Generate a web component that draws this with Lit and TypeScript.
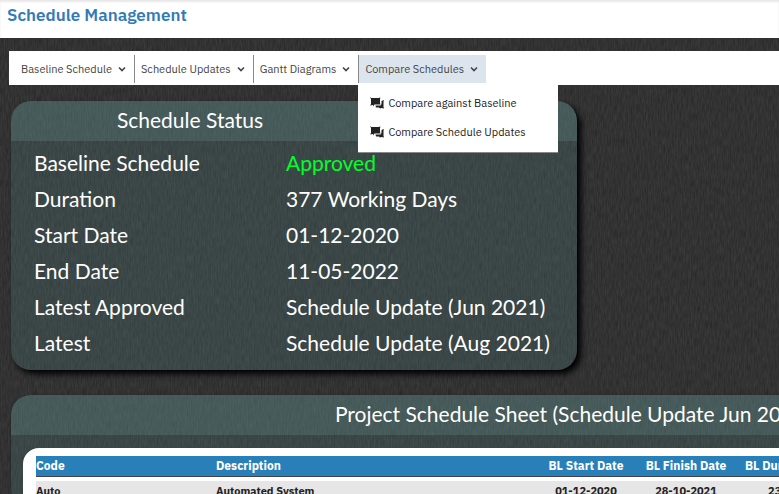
import { LitElement, html, css } from "lit";
import { customElement, state } from "lit/decorators.js";

interface Menu { label: string; }

const chevron = html`<svg class="chevron" viewBox="0 0 8 8" aria-hidden="true">
  <path d="M1 2.5 4 5.5 7 2.5" fill="none" stroke="currentColor" stroke-width="1.6"/></svg>`;

const compareIcon = html`<svg class="compare" viewBox="0 0 14 12" aria-hidden="true">
  <path fill="currentColor" d="M0 0 1.5 1H8.5L10.5 0.5 10 2V6L10.5 7.5H4.5L3 9.5V8L0 8.5 1 7V2Z"/>
  <path fill="currentColor" d="M11.5 4 14 3 13.5 4.5V10L14 11.5 11.5 11 10 11.5 9 10.5H6L5.5 8.5H10.5L11.5 7Z"/></svg>`;

@customElement("app-root")
export class AppRoot extends LitElement {
  @state() private open = 3;

  private menus: Menu[] = [
    { label: "Baseline Schedule" },
    { label: "Schedule Updates" },
    { label: "Gantt Diagrams" },
    { label: "Compare Schedules" },
  ];

  private status = [
    ["Baseline Schedule", "Approved"],
    ["Duration", "377 Working Days"],
    ["Start Date", "01-12-2020"],
    ["End Date", "11-05-2022"],
    ["Latest Approved", "Schedule Update (Jun 2021)"],
    ["Latest", "Schedule Update (Aug 2021)"],
  ];

  static styles = css`
    :host {
      display: flex;
      flex-direction: column;
      height: 100vh;
      overflow: hidden;
      background: #333;
      font-family: "IBM Plex Sans", Roboto, sans-serif;
    }
    * { box-sizing: border-box; }
    .top {
      height: 38px;
      flex: none;
      padding: 5px 7px;
      background: #fff;
      box-shadow: inset 0 2px 2px #e8e8e8;
    }
    .top h1 {
      margin: 0;
      font: 600 17px/20px "IBM Plex Sans", "Open Sans", sans-serif;
      color: #337ab7;
    }
    .page {
      position: relative;
      flex: 1;
      min-height: 0;
      overflow: hidden;
      padding: 13px 0 0 9px;
    }
    .texture {
      position: absolute;
      inset: 0;
      width: 100%;
      height: 100%;
    }
    .bar {
      position: relative;
      z-index: 2;
      display: flex;
      height: 34px;
      padding: 4px 0 0 6px;
      background: #fff;
    }
    .item { position: relative; height: 28px; }
    .item + .item { border-left: 1px solid #888; }
    .item button {
      display: flex;
      align-items: center;
      gap: 6px;
      height: 28px;
      padding: 0 8px 0 6px;
      border: 0;
      background: transparent;
      font: 11px/16px "IBM Plex Sans", Roboto, sans-serif;
      color: #444;
      white-space: nowrap;
    }
    .item.active button { background: #dce4ee; }
    .chevron { width: 8px; height: 8px; flex: none; }
    .drop {
      position: absolute;
      top: 28px;
      left: -1px;
      width: 200px;
      margin: 0;
      padding: 5px 0 6px;
      list-style: none;
      background: #fff;
      border-bottom: 1px solid #888;
    }
    .drop a {
      display: flex;
      align-items: center;
      gap: 4px;
      height: 29px;
      padding: 0 12px;
      font-size: 11px;
      line-height: 16px;
      color: #222;
      text-decoration: none;
      white-space: nowrap;
    }
    .compare { width: 14px; height: 12px; flex: none; }
    .panel {
      position: relative;
      margin-left: 2px;
      border-radius: 20px;
      background: rgba(95, 155, 155, 0.2);
      box-shadow: 4px 4px 6px #000;
      color: #fff;
      font: 21px/36px "Century Gothic", Lato, sans-serif;
    }
    .panel h2 {
      height: 40px;
      margin: 0;
      border-radius: 20px 20px 0 0;
      background: rgba(110, 155, 150, 0.24);
      font: inherit;
      line-height: 38px;
      text-align: center;
    }
    .status { width: 566px; margin-top: 16px; padding-bottom: 9px; }
    .status h2 { padding-right: 208px; }
    .status dl {
      display: grid;
      grid-template-columns: 252px 1fr;
      margin: 0;
      padding: 4px 0 0 23px;
    }
    .status dt, .status dd { margin: 0; height: 36px; white-space: nowrap; }
    .approved { color: #00ff2a; }
    .sheet { width: 1124px; margin-top: 25px; }
    .box {
      margin: 13px 12px 0;
      padding: 8px 13px;
      border-radius: 16px 16px 0 0;
      background: #fff;
    }
    table {
      width: 100%;
      table-layout: fixed;
      border-collapse: collapse;
      font: bold 11px/20px "IBM Plex Sans", "Open Sans", sans-serif;
      color: #222;
    }
    th { height: 20px; padding: 0; background: #2980b9; color: #fff; font-size: 12px; border-bottom: 1px solid #444; }
    td { height: 20px; padding: 0; background: #e6e6e6; text-align: center; }
    .gap td { height: 4px; background: #fff; }
    .left { text-align: left; }
    .code { width: 180px; }
    .desc { width: 324px; }
    .start { width: 92px; }
    .finish { width: 108px; }
    .dur { width: 76px; }
  `;

  private toggle(i: number) {
    this.open = this.open === i ? -1 : i;
  }

  render() {
    return html`
      <header class="top"><h1>Schedule Management</h1></header>
      <main class="page">
        <svg class="texture" aria-hidden="true">
          <filter id="grain" x="0" y="0" width="100%" height="100%" color-interpolation-filters="sRGB">
            <feTurbulence type="fractalNoise" baseFrequency="0.7 0.12" numOctaves="2" seed="4"/>
            <feColorMatrix values="0.1 0 0 0 0.147  0.1 0 0 0 0.147  0.1 0 0 0 0.147  0 0 0 0 1"/>
          </filter>
          <rect width="100%" height="100%" filter="url(#grain)"/>
        </svg>
        <nav class="bar">
          ${this.menus.map((m, i) => html`
            <div class="item ${this.open === i ? "active" : ""}">
              <button @click=${() => this.toggle(i)}>${m.label}${chevron}</button>
              ${i === 3 && this.open === 3 ? html`
                <ul class="drop">
                  <li><a href="#baseline">${compareIcon}Compare against Baseline</a></li>
                  <li><a href="#updates">${compareIcon}Compare Schedule Updates</a></li>
                </ul>` : ""}
            </div>`)}
        </nav>
        <section class="panel status">
          <h2>Schedule Status</h2>
          <dl>
            ${this.status.map(([k, v]) => html`
              <dt>${k}</dt><dd class=${v === "Approved" ? "approved" : ""}>${v}</dd>`)}
          </dl>
        </section>
        <section class="panel sheet">
          <h2>Project Schedule Sheet (Schedule Update Jun 2021)</h2>
          <div class="box">
            <table>
              <thead><tr>
                <th class="left code">Code</th><th class="left desc">Description</th>
                <th class="start">BL Start Date</th><th class="finish">BL Finish Date</th>
                <th class="dur">BL Duration</th><th></th>
              </tr></thead>
              <tbody>
                <tr class="gap"><td colspan="6"></td></tr>
                <tr><td class="left">Auto</td><td class="left">Automated System</td>
                <td>01-12-2020</td><td>28-10-2021</td><td>230</td><td></td></tr>
              </tbody>
            </table>
          </div>
        </section>
      </main>`;
  }
}
